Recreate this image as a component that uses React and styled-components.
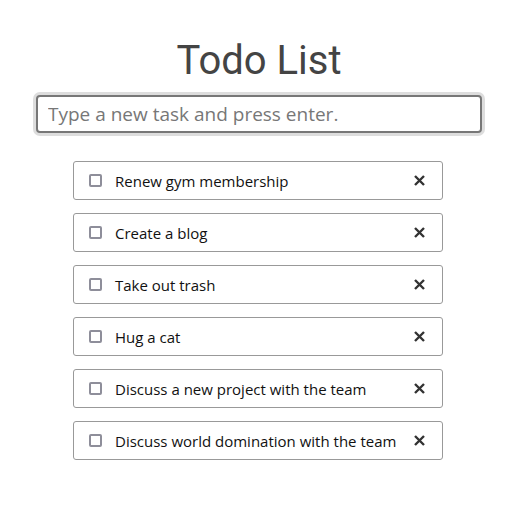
import React from "react";
import styled, { createGlobalStyle } from "styled-components";

const Global = createGlobalStyle`
  html, body { margin: 0; padding: 0; background: #fff; }
  body { font-family: "Open Sans", "Liberation Sans", sans-serif; }
`;

const Page = styled.div`
  width: 446px;
  padding: 37px 0 0 36px;
  display: flex;
  flex-direction: column;
  align-items: center;
`;

const Title = styled.h1`
  margin: 0 0 11px;
  font-family: Roboto, "Liberation Sans", sans-serif;
  font-weight: 400;
  font-size: 40px;
  line-height: 47px;
  color: #444;
`;

const Input = styled.input`
  box-sizing: border-box;
  width: 446px;
  height: 38px;
  border: 2px solid #777;
  border-radius: 4px;
  box-shadow: 0 0 0 3px #ddd;
  padding: 0 10px;
  font-family: "Open Sans", sans-serif;
  font-size: 19px;
  color: #333;
  outline: none;
  &::placeholder { color: #777; }
`;

const List = styled.ul`
  align-self: flex-start;
  list-style: none;
  margin: 28px 0 0 37px;
  padding: 0;
  display: flex;
  flex-direction: column;
  gap: 13px;
`;

const Item = styled.li`
  box-sizing: border-box;
  width: 370px;
  height: 39px;
  border: 1px solid #999;
  border-radius: 3px;
  display: flex;
  align-items: center;
  padding: 0 17px 0 15px;
`;

const Check = styled.input`
  appearance: none;
  margin: 0;
  box-sizing: border-box;
  width: 13px;
  height: 13px;
  border: 2px solid #8e8e9a;
  border-radius: 2px;
  background: #fff;
  &:checked { background: #8e8e9a; }
`;

const Label = styled.span`
  flex: 1;
  margin-left: 13px;
  font-size: 15px;
  color: #111;
`;

const Remove = styled.button`
  border: 0;
  background: none;
  padding: 0;
  width: 11px;
  height: 11px;
  display: flex;
  cursor: pointer;
`;

const todos = [
  "Renew gym membership",
  "Create a blog",
  "Take out trash",
  "Hug a cat",
  "Discuss a new project with the team",
  "Discuss world domination with the team",
];

export default function App() {
  return (
    <>
      <Global />
      <Page>
        <Title>Todo List</Title>
        <Input placeholder="Type a new task and press enter." />
        <List>
          {todos.map((t) => (
            <Item key={t}>
              <Check type="checkbox" />
              <Label>{t}</Label>
              <Remove aria-label="remove">
                <svg width="11" height="11" viewBox="0 0 11 11">
                  <path d="M1 1L10 10M10 1L1 10" stroke="#333" strokeWidth="2.4" />
                </svg>
              </Remove>
            </Item>
          ))}
        </List>
      </Page>
    </>
  );
}
